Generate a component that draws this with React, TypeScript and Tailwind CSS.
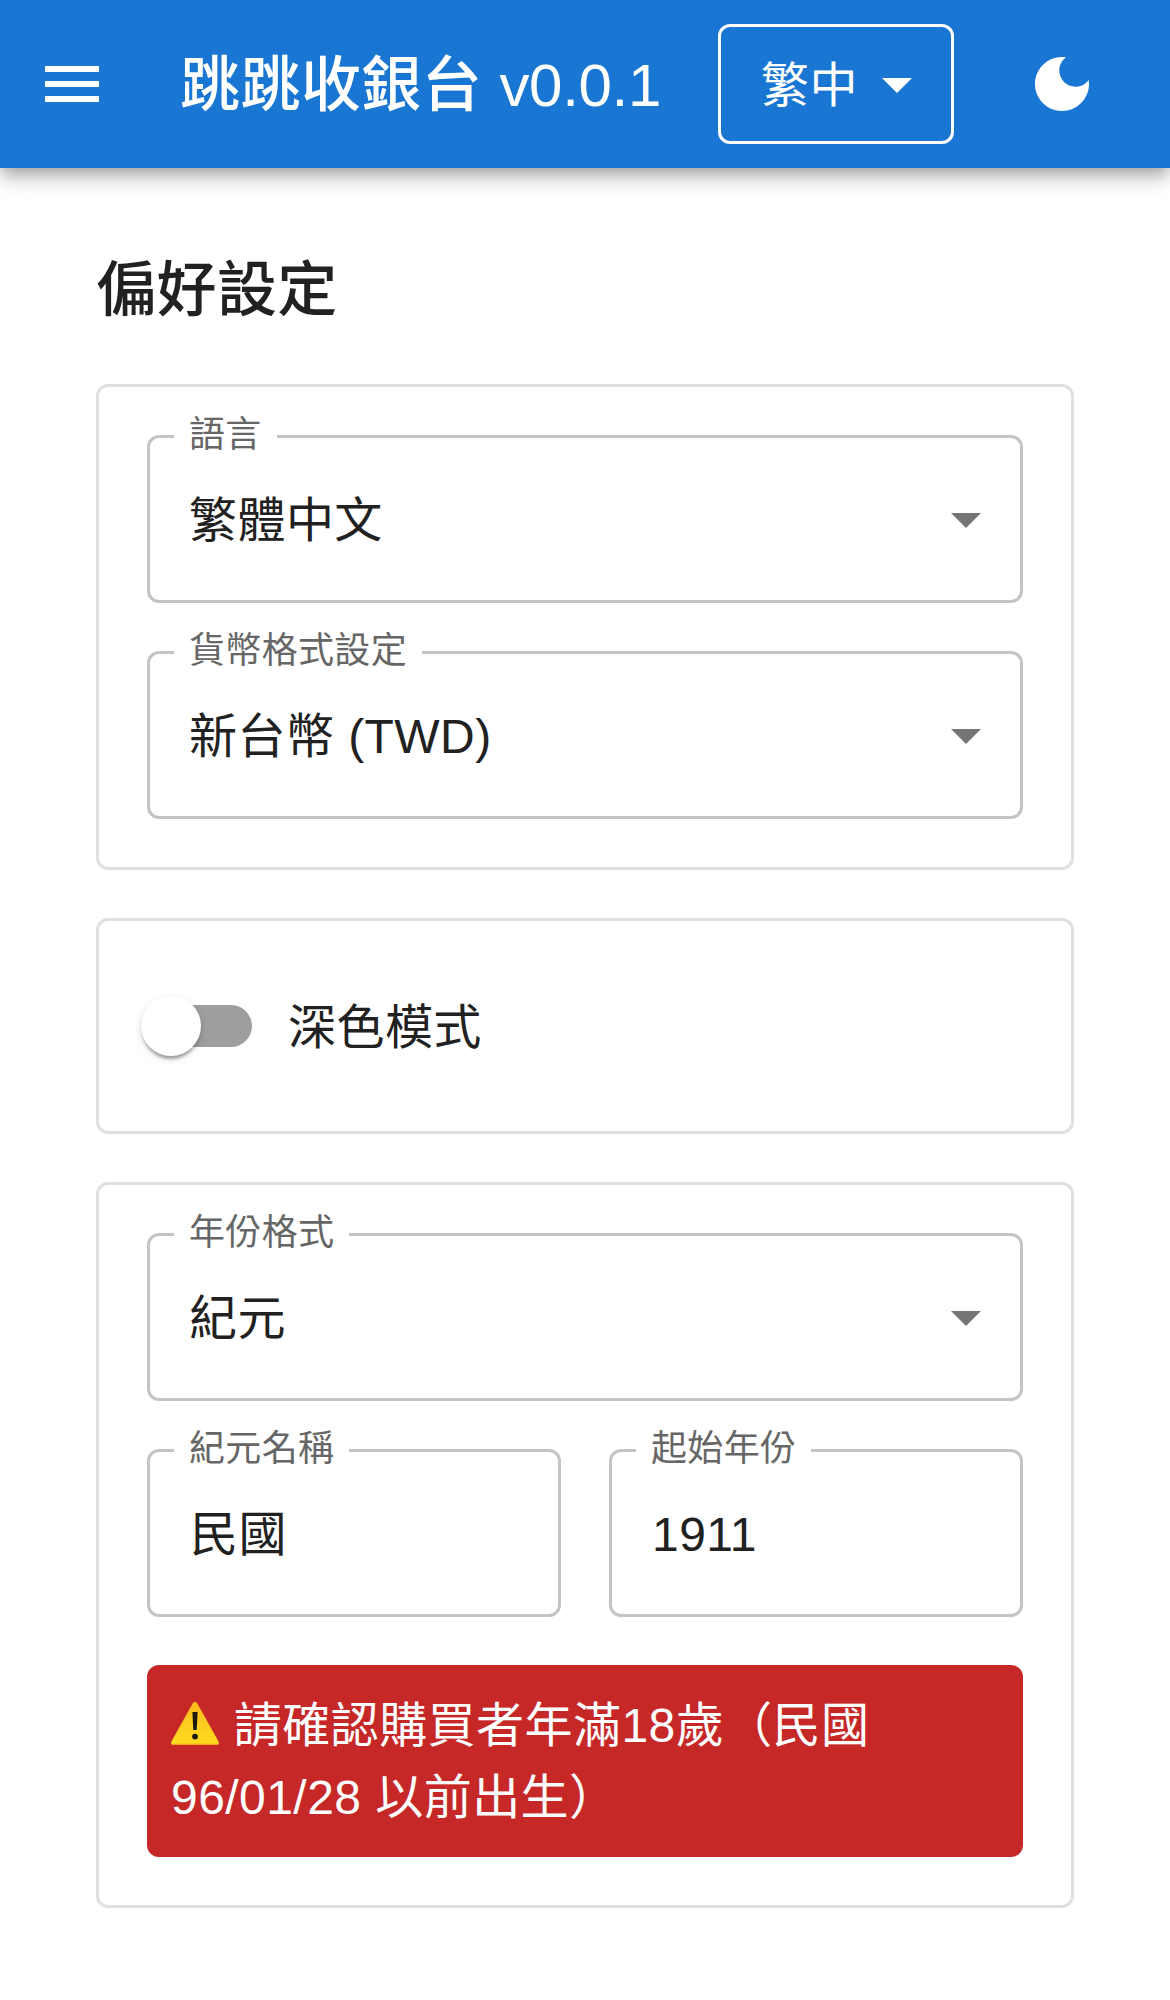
import { clsx } from "clsx";

const ArrowDropDown = ({ className }: { className?: string }) => (
  <svg viewBox="0 0 24 24" fill="currentColor" className={clsx("size-18 shrink-0", className)}>
    <path d="M7 10l5 5 5-5z" />
  </svg>
);

const WarningSign = () => (
  <svg viewBox="0 0 48 43" className="inline-block w-12 h-[43px] mr-px align-[-3px]">
    <defs>
      <linearGradient id="warning" x1="0" y1="0" x2="0" y2="1">
        <stop offset="0" stopColor="#fdb51c" />
        <stop offset="0.35" stopColor="#fdc722" />
        <stop offset="1" stopColor="#ffdc1c" />
      </linearGradient>
    </defs>
    <path
      d="M21.6 1.6C22.6-.4 25.4-.4 26.4 1.6L47.4 39.2C48.6 41.4 47.6 43 45.4 43H2.6C.4 43-.6 41.4.6 39.2Z"
      fill="url(#warning)"
    />
    <path d="M2 42.3H46" stroke="#f2a01e" strokeWidth="1.2" strokeLinecap="round" />
    <path d="M21.4 10H26.6L25.7 28H22.3Z" fill="#1c1a10" />
    <circle cx="24" cy="34.6" r="2.9" fill="#1c1a10" />
  </svg>
);

function Header() {
  return (
    <header className="relative flex items-center h-42 pl-3 pr-12 bg-[#1976d2] text-white shadow-[0_6px_12px_-3px_rgba(0,0,0,0.2),0_12px_15px_0_rgba(0,0,0,0.14),0_3px_30px_0_rgba(0,0,0,0.12)]">
      <button className="p-6 mr-12">
        <svg viewBox="0 0 24 24" fill="currentColor" className="size-18">
          <path d="M3 18h18v-2H3v2zm0-5h18v-2H3v2zm0-7v2h18V6H3z" />
        </svg>
      </button>
      <h1 className="flex-1 pt-1 whitespace-nowrap text-[60px] leading-24 tracking-[0.45px]">
        <span className="font-medium">跳跳收銀台</span>{" "}
        <span className="tracking-[-0.3px]">v0.0.1</span>
      </h1>
      <button className="flex items-center justify-between w-[236px] h-30 pl-10 pr-[18px] mr-12 border-3 border-white rounded-xl text-5xl tracking-[0.45px]">
        <span className="pt-[3px]">繁中</span>
        <ArrowDropDown />
      </button>
      <button className="p-6">
        <svg viewBox="0 0 24 24" fill="currentColor" className="size-18">
          <path d="M12 3c-4.97 0-9 4.03-9 9s4.03 9 9 9 9-4.03 9-9c0-.46-.04-.92-.1-1.36-.98 1.37-2.58 2.26-4.4 2.26-2.98 0-5.4-2.42-5.4-5.4 0-1.81.89-3.42 2.26-4.4-.44-.06-.9-.1-1.36-.1z" />
        </svg>
      </button>
    </header>
  );
}

interface FieldProps {
  label: string;
  value: string;
  select?: boolean;
}

function Field({ label, value, select }: FieldProps) {
  return (
    <div className="relative flex items-center justify-between w-full h-42 pl-[39px] pr-[18px] border-3 border-[#c4c4c4] rounded-xl">
      {/* floating label sits on the top border */}
      <label className="absolute left-6 -top-[29px] px-[15px] bg-white text-4xl leading-[52px] tracking-[0.34px] text-[#666666]">
        {label}
      </label>
      <span className={clsx("pt-[3px] text-5xl leading-18", !select && "pl-px")}>{value}</span>
      {select && <ArrowDropDown className="text-[#757575]" />}
    </div>
  );
}

function Card({ children }: { children: React.ReactNode }) {
  return (
    <section className="flex flex-col gap-12 p-12 border-3 border-[#e0e0e0] rounded-xl">
      {children}
    </section>
  );
}

export default function App() {
  return (
    <div
      lang="zh-Hant"
      className="w-full min-h-[2000px] bg-white text-[#212121] tracking-[0.45px] font-['Liberation_Sans','Noto_Sans_CJK_TC',sans-serif]"
    >
      <Header />

      <main className="flex flex-col gap-12 px-24 pt-18">
        <h2 className="pt-[3px] -mb-[3px] text-[60px] leading-24 font-medium">偏好設定</h2>

        <Card>
          <Field label="語言" value="繁體中文" select />
          <Field label="貨幣格式設定" value="新台幣 (TWD)" select />
        </Card>

        <Card>
          <div className="flex items-center h-[114px]">
            <div className="relative ml-[3px] w-[102px] h-[42px] rounded-full bg-[#9e9e9e]">
              <div className="absolute -left-[9px] -top-[9px] size-15 rounded-full bg-white shadow-[0_6px_3px_-3px_rgba(0,0,0,0.2),0_3px_3px_0_rgba(0,0,0,0.14),0_3px_9px_0_rgba(0,0,0,0.12)]" />
            </div>
            <span className="ml-9 pt-[3px] text-5xl leading-18">深色模式</span>
          </div>
        </Card>

        <Card>
          <Field label="年份格式" value="紀元" select />
          <div className="grid grid-cols-2 gap-12">
            <Field label="紀元名稱" value="民國" />
            <Field label="起始年份" value="1911" />
          </div>
          <div className="px-6 pt-[25px] pb-[23px] rounded-xl bg-[#c62828] text-white text-5xl leading-18">
            <WarningSign /> 請確認購買者年滿18歲（民國
            <br />
            96/01/28 以前出生）
          </div>
        </Card>
      </main>
    </div>
  );
}
